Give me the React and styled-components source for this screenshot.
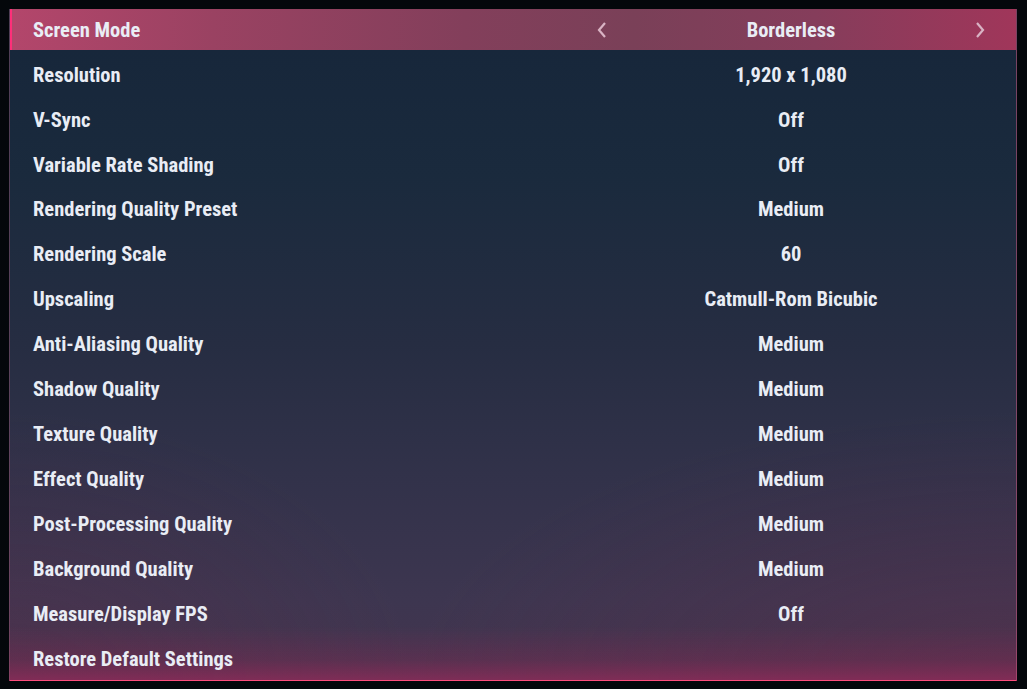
import React from "react";
import styled, { createGlobalStyle } from "styled-components";

const Global = createGlobalStyle`
  html, body { margin: 0; padding: 0; background: #04070b; }
  body { font-family: "Liberation Sans Narrow", "Roboto Condensed", "DejaVu Sans Condensed", "Liberation Sans", sans-serif; }
`;

const Screen = styled.div`
  width: 1027px;
  height: 689px;
  padding: 9px 10px 8px 9px;
  box-sizing: border-box;
  background: #04070b;
`;

const Panel = styled.div`
  position: relative;
  height: 672px;
  display: flex;
  flex-direction: column;
  background:
    linear-gradient(180deg, rgba(140, 40, 85, 0) 0%, rgba(140, 40, 85, 0) 92%, rgba(140, 40, 85, 0.3) 97%, rgba(150, 42, 90, 0.7) 100%),
    radial-gradient(ellipse 60% 40% at 100% 100%, rgba(110, 40, 70, 0.3), rgba(110, 40, 70, 0) 100%),
    radial-gradient(ellipse 40% 40% at 0% 100%, rgba(110, 40, 70, 0.25), rgba(110, 40, 70, 0) 100%),
    linear-gradient(180deg, #16263a 0%, #1a2a3d 25%, #262d42 50%, #32324a 70%, #3d3650 88%, #44344e 100%);
  border-left: 1px solid rgba(150, 90, 120, 0.45);
  border-right: 1px solid rgba(200, 90, 130, 0.55);
  border-bottom: 1px solid #ff4d7d;
  box-sizing: border-box;
  overflow: hidden;
`;

const Row = styled.div`
  display: grid;
  grid-template-columns: 1fr 450px;
  align-items: center;
  box-sizing: border-box;
  height: ${(p) => (p.$header ? "41px" : "45px")};
  margin-bottom: ${(p) => (p.$header ? "1px" : "0")};
  padding-top: ${(p) => (p.$header ? "2px" : "3px")};
  padding-left: 23px;
  position: relative;
  color: #e9edf5;
  font-size: 20.5px;
  font-weight: 700;
  line-height: 1;
  ${(p) =>
    p.$header &&
    `
    margin-left: -1px;
    background: linear-gradient(90deg, #b3466b 0%, #9a4262 20%, #833f5b 45%, #7a4058 62%, #853d5b 80%, #a0365a 100%);
    border-left: 3px solid #ff2f79;
    padding-left: 21px;
  `}
`;

const Label = styled.div`
  white-space: nowrap;
`;

const Value = styled.div`
  display: flex;
  align-items: center;
  justify-content: center;
  position: relative;
  height: 100%;
  white-space: nowrap;
`;

const Arrow = styled.span`
  position: absolute;
  top: 50%;
  transform: translateY(-50%);
  ${(p) => (p.$side === "left" ? "left: 30px;" : "right: 30px;")}
  display: flex;
`;

const Chevron = ({ dir }) => (
  <svg width="12" height="18" viewBox="0 0 12 18">
    <path
      d={dir === "left" ? "M9 2 L3 9 L9 16" : "M3 2 L9 9 L3 16"}
      fill="none"
      stroke="#d9b3c4"
      strokeWidth="2.2"
    />
  </svg>
);

const rows = [
  ["Resolution", "1,920 x 1,080"],
  ["V-Sync", "Off"],
  ["Variable Rate Shading", "Off"],
  ["Rendering Quality Preset", "Medium"],
  ["Rendering Scale", "60"],
  ["Upscaling", "Catmull-Rom Bicubic"],
  ["Anti-Aliasing Quality", "Medium"],
  ["Shadow Quality", "Medium"],
  ["Texture Quality", "Medium"],
  ["Effect Quality", "Medium"],
  ["Post-Processing Quality", "Medium"],
  ["Background Quality", "Medium"],
  ["Measure/Display FPS", "Off"],
  ["Restore Default Settings", ""],
];

export default function App() {
  return (
    <>
      <Global />
      <Screen>
        <Panel>
          <Row $header>
            <Label>Screen Mode</Label>
            <Value>
              <Arrow $side="left"><Chevron dir="left" /></Arrow>
              Borderless
              <Arrow $side="right"><Chevron dir="right" /></Arrow>
            </Value>
          </Row>
          {rows.map(([l, v]) => (
            <Row key={l}>
              <Label>{l}</Label>
              <Value>{v}</Value>
            </Row>
          ))}
        </Panel>
      </Screen>
    </>
  );
}
